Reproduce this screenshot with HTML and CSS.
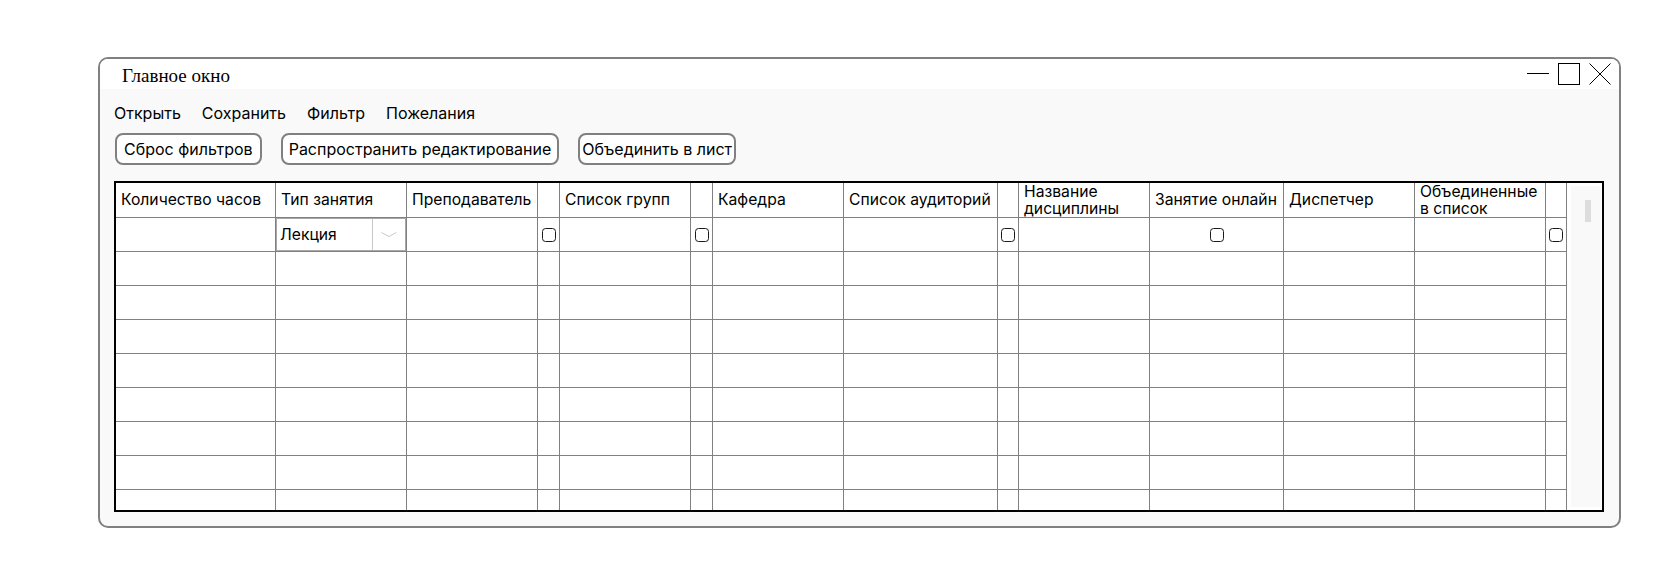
FILE: index.html
```html
<!DOCTYPE html>
<html lang="ru">
<head>
<meta charset="utf-8">
<title>Главное окно</title>
<link rel="stylesheet" href="styles.css">
</head>
<body>
<div class="window">
  <div class="titlebar">
    <span class="title">Главное окно</span>
    <div class="controls">
      <svg width="22" height="22" viewBox="0 0 22 22"><line x1="0" y1="10.5" x2="22" y2="10.5" stroke="#000" stroke-width="1"/></svg>
      <svg width="22" height="22" viewBox="0 0 22 22"><rect x="0.5" y="0.5" width="21" height="21" fill="none" stroke="#000" stroke-width="1"/></svg>
      <svg width="22" height="22" viewBox="0 0 22 22"><path d="M0.5 0.5 L21.5 21.5 M21.5 0.5 L0.5 21.5" stroke="#000" stroke-width="1" fill="none"/></svg>
    </div>
  </div>
  <nav class="menu">
    <span>Открыть</span><span>Сохранить</span><span>Фильтр</span><span>Пожелания</span>
  </nav>
  <div class="toolbar">
    <button class="btn btn-wide">Сброс фильтров</button>
    <button class="btn">Распространить редактирование</button>
    <button class="btn btn-tight">Объединить в лист</button>
  </div>
  <div class="table">
    <div class="grid">
      <div class="h">Количество часов</div>
      <div class="h">Тип занятия</div>
      <div class="h">Преподаватель</div>
      <div class="h"></div>
      <div class="h">Список групп</div>
      <div class="h"></div>
      <div class="h">Кафедра</div>
      <div class="h">Список аудиторий</div>
      <div class="h"></div>
      <div class="h">Название<br>дисциплины</div>
      <div class="h">Занятие онлайн</div>
      <div class="h">Диспетчер</div>
      <div class="h">Объединенные<br>в список</div>
      <div class="h"></div>

      <div class="c"></div>
      <div class="c combo-cell"><div class="combo"><span class="combo-text">Лекция</span><span class="combo-btn"><svg width="16" height="6" viewBox="0 0 16 6"><path d="M0.5 0.5 L8 4.5 L15.5 0.5" fill="none" stroke="#c8c8c8" stroke-width="1"/></svg></span></div></div>
      <div class="c"></div>
      <div class="c ctr"><span class="cb"></span></div>
      <div class="c"></div>
      <div class="c ctr"><span class="cb"></span></div>
      <div class="c"></div>
      <div class="c"></div>
      <div class="c ctr"><span class="cb"></span></div>
      <div class="c"></div>
      <div class="c ctr"><span class="cb"></span></div>
      <div class="c"></div>
      <div class="c"></div>
      <div class="c ctr"><span class="cb"></span></div>

      <div class="c"></div><div class="c"></div><div class="c"></div><div class="c"></div><div class="c"></div><div class="c"></div><div class="c"></div><div class="c"></div><div class="c"></div><div class="c"></div><div class="c"></div><div class="c"></div><div class="c"></div><div class="c"></div>
      <div class="c"></div><div class="c"></div><div class="c"></div><div class="c"></div><div class="c"></div><div class="c"></div><div class="c"></div><div class="c"></div><div class="c"></div><div class="c"></div><div class="c"></div><div class="c"></div><div class="c"></div><div class="c"></div>
      <div class="c"></div><div class="c"></div><div class="c"></div><div class="c"></div><div class="c"></div><div class="c"></div><div class="c"></div><div class="c"></div><div class="c"></div><div class="c"></div><div class="c"></div><div class="c"></div><div class="c"></div><div class="c"></div>
      <div class="c"></div><div class="c"></div><div class="c"></div><div class="c"></div><div class="c"></div><div class="c"></div><div class="c"></div><div class="c"></div><div class="c"></div><div class="c"></div><div class="c"></div><div class="c"></div><div class="c"></div><div class="c"></div>
      <div class="c"></div><div class="c"></div><div class="c"></div><div class="c"></div><div class="c"></div><div class="c"></div><div class="c"></div><div class="c"></div><div class="c"></div><div class="c"></div><div class="c"></div><div class="c"></div><div class="c"></div><div class="c"></div>
      <div class="c"></div><div class="c"></div><div class="c"></div><div class="c"></div><div class="c"></div><div class="c"></div><div class="c"></div><div class="c"></div><div class="c"></div><div class="c"></div><div class="c"></div><div class="c"></div><div class="c"></div><div class="c"></div>
      <div class="c"></div><div class="c"></div><div class="c"></div><div class="c"></div><div class="c"></div><div class="c"></div><div class="c"></div><div class="c"></div><div class="c"></div><div class="c"></div><div class="c"></div><div class="c"></div><div class="c"></div><div class="c"></div>
      <div class="c"></div><div class="c"></div><div class="c"></div><div class="c"></div><div class="c"></div><div class="c"></div><div class="c"></div><div class="c"></div><div class="c"></div><div class="c"></div><div class="c"></div><div class="c"></div><div class="c"></div><div class="c"></div>
    </div>
    <div class="scrollbar"><div class="track"><div class="thumb"></div></div></div>
  </div>
</div>
</body>
</html>
```

FILE: styles.css
```css
html, body {
  margin: 0;
  padding: 0;
  background: #ffffff;
}
body {
  padding: 57px 0 0 98px;
  font-family: Inter, "Noto Sans", "Liberation Sans", sans-serif;
  color: #000;
}
.window {
  box-sizing: border-box;
  width: 1523px;
  height: 471px;
  border: 2px solid #808080;
  border-radius: 10px;
  background: #f9f9f9;
  overflow: hidden;
  display: flex;
  flex-direction: column;
}
.titlebar {
  height: 30px;
  flex: none;
  background: #ffffff;
  display: flex;
  align-items: center;
  justify-content: space-between;
  padding: 0 8px 0 22px;
}
.title {
  font-family: "Liberation Serif", "DejaVu Serif", serif;
  font-size: 19px;
  padding-top: 3px;
}
.controls {
  display: flex;
  gap: 9px;
  align-items: center;
}
.controls svg {
  display: block;
}
.menu {
  display: flex;
  gap: 21px;
  padding: 12px 0 0 14px;
  height: 24px;
  align-items: center;
  font-size: 16px;
}
.toolbar {
  display: flex;
  gap: 19px;
  padding: 8px 0 0 15px;
}
.btn {
  box-sizing: border-box;
  height: 32px;
  padding: 0 6px;
  border: 2px solid #808080;
  border-radius: 8px;
  background: #ffffff;
  font-family: Inter, "Noto Sans", "Liberation Sans", sans-serif;
  font-size: 16px;
  color: #000;
}
.btn-wide {
  padding: 0 7px;
}
.btn-tight {
  padding: 0 2px;
}
.table {
  box-sizing: border-box;
  margin: 16px 0 0 14px;
  width: 1490px;
  height: 331px;
  border: 2px solid #000;
  background: #ffffff;
  display: flex;
  overflow: hidden;
}
.grid {
  display: grid;
  grid-template-columns: 160px 131px 131px 22px 131px 22px 131px 154px 21px 131px 134px 131px 131px 21px;
  grid-template-rows: 35px repeat(9, 34px);
  width: 1451px;
  flex: none;
  font-size: 15.7px;
}
.h, .c {
  box-sizing: border-box;
  border-right: 1px solid #808080;
  border-bottom: 1px solid #808080;
  background: #ffffff;
}
.h {
  display: flex;
  align-items: center;
  padding: 0 2px 0 5px;
  line-height: 17.5px;
  white-space: nowrap;
}
.ctr {
  display: flex;
  align-items: center;
  justify-content: center;
}
.cb {
  box-sizing: border-box;
  width: 14px;
  height: 14px;
  border: 1.5px solid #1a1a1a;
  border-radius: 3.5px;
  background: #fff;
}
.combo-cell {
  padding: 0;
}
.combo {
  box-sizing: border-box;
  height: 100%;
  width: 100%;
  border: 1px solid #a8a8a8;
  display: flex;
  align-items: stretch;
}
.combo-text {
  flex: 1;
  display: flex;
  align-items: center;
  padding-left: 3px;
  font-size: 15.7px;
}
.combo-btn {
  width: 32px;
  border-left: 1px solid #c8c8c8;
  display: flex;
  align-items: center;
  justify-content: center;
}
.combo-btn svg {
  display: block;
}
.scrollbar {
  flex: 1;
  padding: 3px 1px 3px 4px;
  background: #ffffff;
}
.track {
  height: 100%;
  background: #f9f9f9;
  padding-top: 14px;
  box-sizing: border-box;
}
.thumb {
  width: 6px;
  height: 22px;
  margin-left: 14px;
  background: #dddddd;
}
```
